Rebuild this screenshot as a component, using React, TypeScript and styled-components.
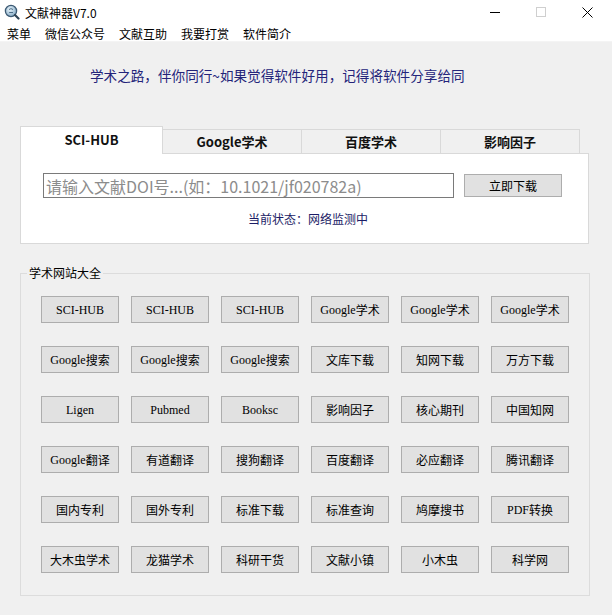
import React from 'react'
import styled, { createGlobalStyle } from 'styled-components'

const GlobalStyle = createGlobalStyle`
  html, body {
    margin: 0;
    padding: 0;
    background: #f0f0f0;
  }
  body {
    font-family: "Noto Sans CJK SC", "Liberation Sans", sans-serif;
    color: #000;
  }
`

const Window = styled.div`
  width: 612px;
  height: 615px;
  background: #f0f0f0;
  display: flex;
  flex-direction: column;
  overflow: hidden;
`

const TitleBar = styled.div`
  height: 24px;
  background: #fff;
  display: flex;
  align-items: center;
  padding-left: 4px;
`

const Title = styled.span`
  font-size: 12px;
  line-height: 16px;
  margin-left: 5px;
  margin-top: 1px;
`

const Controls = styled.div`
  margin-left: auto;
  display: flex;
  height: 100%;
  margin-right: 2px;
`

const ControlButton = styled.div`
  width: 46px;
  height: 100%;
  display: flex;
  align-items: center;
  justify-content: center;
`

const MenuBar = styled.div`
  height: 17px;
  background: #fff;
  display: flex;
  align-items: center;
  padding-left: 1px;
  border-bottom: 1px solid #f4f4f4;
`

const MenuItem = styled.span`
  font-size: 12px;
  line-height: 16px;
  padding: 0 8px 0 6px;
  margin-top: 2px;
`

const Banner = styled.div`
  padding: 23px 0 0 90px;
  height: 82px;
  box-sizing: border-box;
  font-size: 13.6px;
  line-height: 20px;
  color: #24247a;
`

const Tabs = styled.div`
  margin: 0 0 0 20px;
  width: 569px;
`

const TabStrip = styled.div`
  display: flex;
  align-items: flex-end;
  height: 29px;
`

const Tab = styled.div<{ $active?: boolean; $w: number }>`
  width: ${(p) => p.$w}px;
  height: ${(p) => (p.$active ? 28 : 24)}px;
  box-sizing: border-box;
  background: ${(p) => (p.$active ? '#fff' : '#f0f0f0')};
  border: 1px solid #d9d9d9;
  border-bottom: none;
  border-left: ${(p) => (p.$active ? '1px solid #d9d9d9' : 'none')};
  margin-bottom: ${(p) => (p.$active ? -1 : 0)}px;
  position: relative;
  z-index: ${(p) => (p.$active ? 1 : 0)};
  display: flex;
  align-items: center;
  justify-content: center;
  font-size: 13px;
  font-weight: bold;
  color: #111;
  padding-bottom: ${(p) => (p.$active ? 3 : 0)}px;
`

const Panel = styled.div`
  height: 91px;
  box-sizing: border-box;
  background: #fff;
  border: 1px solid #d9d9d9;
  padding: 19px 0 0 22px;
`

const SearchRow = styled.div`
  display: flex;
  align-items: center;
`

const DoiInput = styled.input`
  width: 411px;
  height: 25px;
  box-sizing: border-box;
  border: 1px solid #7a7a7a;
  padding: 0 2px;
  font-family: "Noto Sans CJK SC", "Liberation Sans", sans-serif;
  font-size: 16px;
  outline: none;
  &::placeholder {
    color: #8c8c8c;
  }
`

const DownloadButton = styled.div`
  width: 98px;
  height: 23px;
  box-sizing: border-box;
  margin-left: 10px;
  background: #e1e1e1;
  border: 1px solid #adadad;
  display: flex;
  align-items: center;
  justify-content: center;
  font-size: 12px;
`

const Status = styled.div`
  margin: 13px 0 0 205px;
  font-size: 12px;
  line-height: 16px;
  color: #1c1c66;
`

const Group = styled.fieldset`
  margin: 21px 0 0 20px;
  width: 570px;
  height: 331px;
  box-sizing: border-box;
  border: 1px solid #dcdcdc;
  padding: 0;
`

const Legend = styled.legend`
  margin-left: 6px;
  padding: 0 2px;
  font-size: 12px;
  line-height: 16px;
`

const Grid = styled.div`
  display: grid;
  grid-template-columns: repeat(6, 78px);
  grid-auto-rows: 27px;
  column-gap: 12px;
  row-gap: 23px;
  padding: 15px 0 0 20px;
`

const SiteButton = styled.div`
  box-sizing: border-box;
  background: #e1e1e1;
  border: 1px solid #adadad;
  display: flex;
  align-items: center;
  justify-content: center;
  font-size: 12px;
  line-height: 14px;
  white-space: nowrap;
`

const Latin = styled.span`
  font-family: "Liberation Serif", "DejaVu Serif", serif;
  font-size: 12px;
`

const Han = styled.span`
  font-family: "Noto Sans CJK SC", sans-serif;
  font-size: 12px;
`

const sites = [
  'SCI-HUB', 'SCI-HUB', 'SCI-HUB', 'Google学术', 'Google学术', 'Google学术',
  'Google搜索', 'Google搜索', 'Google搜索', '文库下载', '知网下载', '万方下载',
  'Ligen', 'Pubmed', 'Booksc', '影响因子', '核心期刊', '中国知网',
  'Google翻译', '有道翻译', '搜狗翻译', '百度翻译', '必应翻译', '腾讯翻译',
  '国内专利', '国外专利', '标准下载', '标准查询', '鸠摩搜书', 'PDF转换',
  '大木虫学术', '龙猫学术', '科研干货', '文献小镇', '小木虫', '科学网',
]

// split a label into latin and chinese runs, the old WinForms font draws them differently
const SiteLabel = ({ text }: { text: string }) => {
  const parts = text.match(/[\x00-\x7f]+|[^\x00-\x7f]+/g) || []
  return (
    <>
      {parts.map((p, i) =>
        /^[\x00-\x7f]/.test(p) ? <Latin key={i}>{p}</Latin> : <Han key={i}>{p}</Han>
      )}
    </>
  )
}

const AppIcon = () => (
  <svg width="16" height="16" viewBox="0 0 16 16">
    <defs>
      <radialGradient id="lens" cx="40%" cy="35%" r="70%">
        <stop offset="0%" stopColor="#e8f4fb" />
        <stop offset="100%" stopColor="#7fa6c2" />
      </radialGradient>
    </defs>
    <circle cx="7" cy="7" r="5.6" fill="url(#lens)" stroke="#3d5a73" strokeWidth="1.3" />
    <path d="M5 5.5 Q7 3.8 9 5.5" stroke="#4a6b86" strokeWidth="1" fill="none" />
    <path d="M5.2 8.5 L9 8.5" stroke="#4a6b86" strokeWidth="1" />
    <path d="M11 11 L14.5 14.5" stroke="#2f4456" strokeWidth="2.2" strokeLinecap="round" />
  </svg>
)

const tabs = [
  { label: 'SCI-HUB', w: 143 },
  { label: 'Google学术', w: 139 },
  { label: '百度学术', w: 139 },
  { label: '影响因子', w: 139 },
]

export default function App() {
  return (
    <Window>
      <GlobalStyle />
      <TitleBar>
        <AppIcon />
        <Title>文献神器V7.0</Title>
        <Controls>
          <ControlButton>
            <svg width="10" height="10" viewBox="0 0 10 10">
              <path d="M0 5.5 H10" stroke="#000" strokeWidth="1" />
            </svg>
          </ControlButton>
          <ControlButton>
            <svg width="10" height="10" viewBox="0 0 10 10">
              <rect x="0.5" y="0.5" width="9" height="9" fill="none" stroke="#cfcfcf" strokeWidth="1" />
            </svg>
          </ControlButton>
          <ControlButton>
            <svg width="11" height="11" viewBox="0 0 11 11">
              <path d="M0.5 0.5 L10.5 10.5 M10.5 0.5 L0.5 10.5" stroke="#000" strokeWidth="1" />
            </svg>
          </ControlButton>
        </Controls>
      </TitleBar>
      <MenuBar>
        <MenuItem>菜单</MenuItem>
        <MenuItem>微信公众号</MenuItem>
        <MenuItem>文献互助</MenuItem>
        <MenuItem>我要打赏</MenuItem>
        <MenuItem>软件简介</MenuItem>
      </MenuBar>

      <Banner>学术之路，伴你同行~如果觉得软件好用，记得将软件分享给同</Banner>

      <Tabs>
        <TabStrip>
          {tabs.map((t, i) => (
            <Tab key={t.label} $w={t.w} $active={i === 0}>
              {t.label}
            </Tab>
          ))}
        </TabStrip>
        <Panel>
          <SearchRow>
            <DoiInput placeholder="请输入文献DOI号...(如：10.1021/jf020782a)" />
            <DownloadButton>立即下载</DownloadButton>
          </SearchRow>
          <Status>当前状态：网络监测中</Status>
        </Panel>
      </Tabs>

      <Group>
        <Legend>学术网站大全</Legend>
        <Grid>
          {sites.map((s, i) => (
            <SiteButton key={i}>
              <SiteLabel text={s} />
            </SiteButton>
          ))}
        </Grid>
      </Group>
    </Window>
  )
}
